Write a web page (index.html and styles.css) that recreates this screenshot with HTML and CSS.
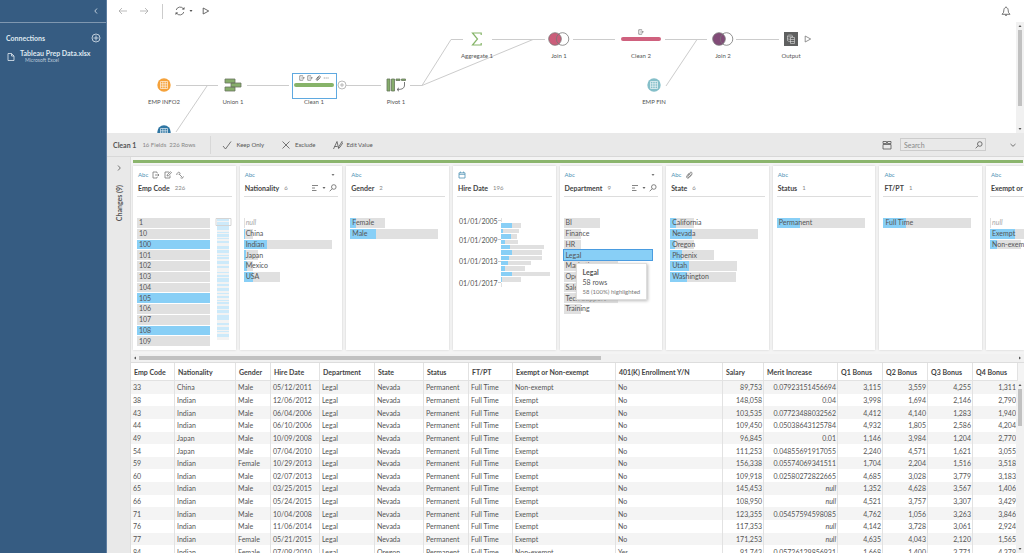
FILE: index.html
```html
<!DOCTYPE html>
<html lang="en">
<head>
<meta charset="utf-8">
<title>Tableau Prep</title>
<link rel="stylesheet" href="styles.css">
</head>
<body>
<svg class="symbols" aria-hidden="true">
  <symbol id="i-rename" viewBox="0 0 8 8"><path d="M5 2V1H1v6h4V6M3 4h4M5.700 2.700L7 4 5.700 5.300"/></symbol>
  <symbol id="i-edit" viewBox="0 0 8 8"><path d="M5 1H1v6h5V4.500M3 5l.4-1.400L6.500.700l1 1L4.400 4.700z"/></symbol>
  <symbol id="i-calc" viewBox="0 0 8 8"><path d="M.7 4C1 1 3.500.500 4 2.200c.4 1.500-1.500 2-1 .6M3.500 3.500L6.500 6.500M4.500 6.800c1.500.8 2.800 0 3-1.300"/></symbol>
  <symbol id="i-clip" viewBox="0 0 8 8"><path d="M5.500 2.500L3 5.200c-.6.800.5 1.600 1.100.9L6.800 3c1-1.300-.7-2.600-1.700-1.500L1.800 5c-1 1.500.8 3 2.200 1.700L7 3.500M4.500 2L2.500 4.200"/></symbol>
  <symbol id="i-search" viewBox="0 0 8 8"><circle cx="4.800" cy="3" r="2.300"/><path d="M3.200 4.700L.7 7.300"/></symbol>
  <symbol id="i-sort" viewBox="0 0 8 8"><path d="M1 1.500h6M1 4h3M1 6.500h4.500"/></symbol>
  <symbol id="i-caret" viewBox="0 0 4 4"><path class="solid" d="M.5 1h3L2 3z"/></symbol>
  <symbol id="i-play" viewBox="0 0 8 8"><path d="M1.200 1v6l5.500-3z"/></symbol>
  <symbol id="i-table" viewBox="0 0 14 14"><circle class="disc" cx="7" cy="7" r="6.700"/><path class="gridlines" d="M3.500 3.500h7v7h-7zM3.500 5.800h7M3.500 8.200h7M5.800 3.500v7M8.200 3.500v7"/></symbol>
  <symbol id="i-join" viewBox="0 0 22 14"><circle class="ring" cx="14.500" cy="7" r="6.300"/><circle class="disc" cx="7" cy="7" r="6.300"/><circle class="ring" cx="7" cy="7" r="6.300"/><path class="ring" d="M10.800 2a6.300 6.300 0 0 0 0 10"/></symbol>
</svg>
<div class="app">
  <aside class="sidebar">
    <div class="sidebar-top"><button class="plain" aria-label="Collapse"><svg class="ic" viewBox="0 0 8 8"><path d="M5 1.500L2.800 4 5 6.500"/></svg></button></div>
    <div class="conn-head"><h2>Connections</h2><button class="plain" aria-label="Add connection"><svg class="ic add" viewBox="0 0 10 10"><circle cx="5" cy="5" r="4"/><path d="M5 2.500v5M2.500 5h5"/></svg></button></div>
    <a class="conn" href="#">
      <svg class="ic" viewBox="0 0 8 8"><path d="M1 .5h3.500L7 3v4.500H1zM4.500.500V3H7"/></svg>
      <span><b>Tableau Prep Data.xlsx</b><small>Microsoft Excel</small></span>
    </a>
  </aside>
  <main class="main">
    <header class="toolbar">
      <button class="plain faint" aria-label="Back"><svg class="arrow" viewBox="0 0 10 8"><path d="M9 4H1M4 1L1 4l3 3"/></svg></button>
      <button class="plain faint" aria-label="Forward"><svg class="arrow" viewBox="0 0 10 8"><path d="M1 4h8M6 1l3 3-3 3"/></svg></button>
      <span class="rule"></span>
      <button class="plain refresh" aria-label="Refresh"><svg class="arrow" viewBox="0 0 10 10"><path d="M1.200 4A4 4 0 0 1 8.500 3M8.800 6A4 4 0 0 1 1.500 7"/><path class="solid" d="M6.800 3.500h2.700V1zM3.200 6.500H.5V9z"/></svg><svg class="caret"><use href="#i-caret"/></svg></button>
      <button class="plain run" aria-label="Run"><svg class="ic"><use href="#i-play"/></svg></button>
      <button class="plain bell" aria-label="Notifications"><svg class="arrow" viewBox="0 0 10 10"><path d="M5 .5v1M1 8.300h8L7.500 6.500 7 3.200C6.500 1 3.500 1 3 3.200L2.500 6.500zM4 9.300h2"/></svg></button>
    </header>
    <section class="flow">
      <svg class="links" aria-hidden="true"><path d="M69 63.500h42M100 64L69 110M140 63.500h42M239 63.500h35M303 63.500h12L344 17.500h12M315 63.500L426 17.500M385 17.500h53M466 17.500h42M558 17.500h42M559 64L590 17.500M600 17.500h-20M629 17.500h43"/></svg>
      <div class="node n-info"><svg class="disc-ic orange"><use href="#i-table"/></svg><span>EMP INFO2</span></div>
      <div class="node n-blue"><svg class="disc-ic blue"><use href="#i-table"/></svg></div>
      <div class="node n-union"><svg class="union" viewBox="0 0 18 14"><path d="M1 1h10v4H1zM7 5h10v4H7zM1 9h10v4H1z"/></svg><span>Union 1</span></div>
      <div class="node n-clean selected"><span class="marks"><svg><use href="#i-rename"/></svg><svg><use href="#i-rename"/></svg><svg><use href="#i-clip"/></svg><svg viewBox="0 0 8 8"><path d="M1 4h1.500M3.500 4H5M6 4h1.500"/></svg></span><span class="step green"></span><span>Clean 1</span></div>
      <button class="plain plus" aria-label="Add step"><svg class="add" viewBox="0 0 10 10"><circle cx="5" cy="5" r="4"/><path d="M5 3v4M3 5h4"/></svg></button>
      <div class="node n-pivot"><svg class="pivot" viewBox="0 0 20 14"><path class="g" d="M1 1h3v12H1zM5.500 1h3v12h-3zM10 1h4v1.500h-4zM15.500 1h4v1.500h-4z"/><path d="M18.500 4v3c0 3-2 4.500-7 4.500M13 9.800l-2 1.700 2 1.700"/></svg><span>Pivot 1</span></div>
      <div class="node n-agg"><svg class="sigma" viewBox="0 0 12 14"><path d="M10.200 3V1H1.500l5 6-5 6h8.700v-2"/></svg><span>Aggregate 1</span></div>
      <div class="node n-join1"><svg class="join rose"><use href="#i-join"/></svg><span>Join 1</span></div>
      <div class="node n-clean2"><span class="marks"><svg><use href="#i-rename"/></svg></span><span class="step rose-bg"></span><span>Clean 2</span></div>
      <div class="node n-join2"><svg class="join plum"><use href="#i-join"/></svg><span>Join 2</span></div>
      <div class="node n-fin"><svg class="disc-ic teal"><use href="#i-table"/></svg><span>EMP FIN</span></div>
      <div class="node n-out"><svg class="output" viewBox="0 0 14 14"><path class="bg" d="M0 0h14v14H0z"/><path d="M7 9.500c-1.500 0-3.500-.2-3.500-1V4c0-1.300 5-1.300 5 0v1M3.500 4c0 1.200 5 1.200 5 0M3.500 6.300c0 .8 1.500 1 3 1M6.500 5.500h4v6h-4zM6.500 7.500h4M6.500 9.500h4"/></svg><span>Output</span></div>
      <button class="plain out-run" aria-label="Run output"><svg class="ic"><use href="#i-play"/></svg></button>
      <div class="vscroll"><svg class="caret up"><use href="#i-caret"/></svg><i></i><svg class="caret"><use href="#i-caret"/></svg></div>
    </section>
    <section class="stepbar">
      <h1>Clean 1</h1><span class="counts">16 Fields&ensp;226 Rows</span><span class="divider"></span>
      <button class="action"><svg class="arrow" viewBox="0 0 10 10"><path d="M1 6l2.500 3L9 1.500"/></svg>Keep Only</button>
      <button class="action"><svg class="arrow" viewBox="0 0 10 10"><path d="M1.500 1.500l7 7M8.500 1.500l-7 7"/></svg>Exclude</button>
      <button class="action"><svg class="arrow" viewBox="0 0 10 10"><path d="M.5 9L4 1.500 5.500 8M1.500 6.500h3M5.500 8.500l.5-2L9 1.500l1 1-3 4.700z"/></svg>Edit Value</button>
      <button class="plain view" aria-label="Switch view"><svg class="arrow" viewBox="0 0 10 10"><path d="M1 1.500h3.500v2H1zM5.500 1.500H9v2H5.500zM1 4.500h8V9H1z"/></svg></button>
      <label class="search"><input type="text" placeholder="Search" aria-label="Search"><svg class="ic"><use href="#i-search"/></svg></label>
      <button class="plain chev" aria-label="Collapse pane"><svg class="ic" viewBox="0 0 8 8"><path d="M1.500 3L4 5.300 6.500 3"/></svg></button>
    </section>
    <div class="work">
      <aside class="changes"><button class="plain" aria-label="Expand changes"><svg class="ic" viewBox="0 0 8 8"><path d="M3 1.500L5.300 4 3 6.500"/></svg></button><span>Changes (9)</span></aside>
      <div class="panes">
        <section class="profile">
          <div class="greenbar"></div>
          <div class="cards">
            <article class="card">
              <div class="kind">Abc<svg><use href="#i-rename"/></svg><svg><use href="#i-edit"/></svg><svg><use href="#i-calc"/></svg></div>
              <h3>Emp Code<em>226</em></h3>
              <div class="body codes">
                <ul class="list full"><li><i></i><span>1</span></li><li><i></i><span>10</span></li><li class="on"><i></i><span>100</span></li><li><i></i><span>101</span></li><li><i></i><span>102</span></li><li><i></i><span>103</span></li><li><i></i><span>104</span></li><li class="on"><i></i><span>105</span></li><li><i></i><span>106</span></li><li><i></i><span>107</span></li><li class="on"><i></i><span>108</span></li><li><i></i><span>109</span></li></ul>
                <svg class="minimap" viewBox="0 0 17 122" preserveAspectRatio="none"><path class="base" d="M2 0h12v122H2z"/><path class="hit" d="M2 1h12v2H2zM2 4h12v3H2zM2 8h12v4H2zM2 14h12v1H2zM2 16h12v3H2zM2 20h12v1H2zM2 23h12v2H2zM2 28h12v3H2zM2 32h12v3H2zM2 37h12v1H2zM2 39h12v2H2zM2 43h12v3H2zM2 48h12v2H2zM2 54h12v1H2zM2 57h12v2H2zM2 60h12v4H2zM2 66h12v2H2zM2 70h12v3H2zM2 75h12v1H2zM2 78h12v2H2zM2 82h12v1H2zM2 84h12v2H2zM2 88h12v3H2zM2 92h12v3H2zM2 97h12v5H2zM2 105h12v2H2zM2 109h12v3H2zM2 113h12v1H2zM2 116h12v3H2z"/><path class="lens" d="M1 .5h15v7H1z"/></svg>
              </div>
            </article>
            <article class="card">
              <div class="kind">Abc<svg class="menu"><use href="#i-caret"/></svg></div>
              <h3>Nationality<em>6</em><span class="tools"><svg><use href="#i-sort"/></svg><svg class="caret"><use href="#i-caret"/></svg><svg><use href="#i-search"/></svg></span></h3>
              <div class="body"><ul class="list">
                <li class="null"><i style="width:1%"></i><span>null</span></li>
                <li><i style="width:11%"></i><b style="width:2%"></b><span>China</span></li>
                <li><i style="width:100%"></i><b style="width:26%"></b><span>Indian</span></li>
                <li><i style="width:16%"></i><b style="width:3%"></b><span>Japan</span></li>
                <li><i style="width:11%"></i><b style="width:4%"></b><span>Mexico</span></li>
                <li><i style="width:41%"></i><b style="width:11%"></b><span>USA</span></li>
              </ul></div>
            </article>
            <article class="card">
              <div class="kind">Abc</div><h3>Gender<em>2</em></h3>
              <div class="body"><ul class="list">
                <li><i style="width:40%"></i><b style="width:7%"></b><span>Female</span></li>
                <li><i style="width:100%"></i><b style="width:29%"></b><span>Male</span></li>
              </ul></div>
            </article>
            <article class="card">
              <div class="kind"><svg class="cal" viewBox="0 0 8 8"><path d="M1 1.800h6v5.200H1zM1 3.300h6M2.500.600v1.200M5.500.600v1.200"/></svg></div><h3>Hire Date<em>196</em></h3>
              <div class="body hist">
                <div class="axis"><span class="d1">01/01/2005</span><span class="d2">01/01/2009</span><span class="d3">01/01/2013</span><span class="d4">01/01/2017</span></div>
                <ul class="bins">
                  <li><i style="width:3%"></i></li>
                  <li><i style="width:41%"></i><b style="width:24%"></b></li>
                  <li><i style="width:38%"></i><b style="width:5%"></b></li>
                  <li><i style="width:33%"></i><b style="width:21%"></b></li>
                  <li><i style="width:35%"></i><b style="width:8%"></b></li>
                  <li><i style="width:88%"></i><b style="width:20%"></b></li>
                  <li><i style="width:85%"></i><b style="width:24%"></b></li>
                  <li><i style="width:85%"></i><b style="width:17%"></b></li>
                  <li><i style="width:62%"></i><b style="width:15%"></b></li>
                  <li><i style="width:50%"></i><b style="width:9%"></b></li>
                  <li><i style="width:100%"></i><b style="width:24%"></b></li>
                  <li><i style="width:41%"></i><b style="width:3%"></b></li>
                  <li><i style="width:3%"></i></li>
                </ul>
              </div>
            </article>
            <article class="card">
              <div class="kind">Abc<svg class="menu"><use href="#i-caret"/></svg></div>
              <h3>Department<em>9</em><span class="tools"><svg><use href="#i-sort"/></svg><svg class="caret"><use href="#i-caret"/></svg><svg><use href="#i-search"/></svg></span></h3>
              <div class="body"><ul class="list">
                <li><i style="width:41%"></i><span>BI</span></li>
                <li><i style="width:20%"></i><span>Finance</span></li>
                <li><i style="width:20%"></i><span>HR</span></li>
                <li class="picked"><i></i><span>Legal</span></li>
                <li><i style="width:62%"></i><span>Marketing</span></li>
                <li><i style="width:41%"></i><span>Operations</span></li>
                <li><i style="width:41%"></i><span>Sales</span></li>
                <li><i style="width:62%"></i><span>Tech Support</span></li>
                <li><i style="width:20%"></i><span>Training</span></li>
              </ul>
              <div class="tip" role="tooltip"><strong>Legal</strong><span>58 rows</span><small>58 (100%) highlighted</small></div></div>
            </article>
            <article class="card">
              <div class="kind">Abc<svg><use href="#i-clip"/></svg></div><h3>State<em>6</em></h3>
              <div class="body"><ul class="list">
                <li><i style="width:27%"></i><b style="width:7%"></b><span>California</span></li>
                <li><i style="width:100%"></i><b style="width:25%"></b><span>Nevada</span></li>
                <li><i style="width:27%"></i><b style="width:6%"></b><span>Oregon</span></li>
                <li><i style="width:50%"></i><b style="width:13%"></b><span>Phoenix</span></li>
                <li><i style="width:76%"></i><b style="width:21%"></b><span>Utah</span></li>
                <li><i style="width:75%"></i><b style="width:19%"></b><span>Washington</span></li>
              </ul></div>
            </article>
            <article class="card">
              <div class="kind">Abc</div><h3>Status<em>1</em></h3>
              <div class="body"><ul class="list"><li><i style="width:100%"></i><b style="width:26%"></b><span>Permanent</span></li></ul></div>
            </article>
            <article class="card">
              <div class="kind">Abc</div><h3>FT/PT<em>1</em></h3>
              <div class="body"><ul class="list"><li><i style="width:100%"></i><b style="width:26%"></b><span>Full Time</span></li></ul></div>
            </article>
            <article class="card cut">
              <div class="kind">Abc</div><h3>Exempt or</h3>
              <div class="body"><ul class="list">
                <li class="null"><i style="width:1%"></i><span>null</span></li>
                <li><i style="width:100%"></i><b style="width:28%"></b><span>Exempt</span></li>
                <li><i style="width:35%"></i><b style="width:8%"></b><span>Non-exempt</span></li>
              </ul></div>
            </article>
          </div>
          <div class="hscroll"><svg class="caret left"><use href="#i-caret"/></svg><i></i><svg class="caret right"><use href="#i-caret"/></svg></div>
        </section>
        <section class="grid">
          <div class="gridview">
          <table>
            <colgroup><col class="w44"><col class="w61"><col class="w35"><col class="w49"><col class="w55"><col class="w49"><col class="w45"><col class="w44"><col class="w103"><col class="w107"><col class="w41"><col class="w74"><col class="w45"><col class="w45"><col class="w45"><col class="w45"></colgroup>
            <thead><tr><th>Emp Code</th><th>Nationality</th><th>Gender</th><th>Hire Date</th><th>Department</th><th>State</th><th>Status</th><th>FT/PT</th><th>Exempt or Non-exempt</th><th>401(K) Enrollment Y/N</th><th>Salary</th><th>Merit Increase</th><th>Q1 Bonus</th><th>Q2 Bonus</th><th>Q3 Bonus</th><th>Q4 Bonus</th></tr></thead>
            <tbody>
              <tr><td>33<td>China<td>Male<td>05/12/2011<td>Legal<td>Nevada<td>Permanent<td>Full Time<td>Non-exempt<td>No<td>89,753<td>0.07923151456694<td>3,115<td>3,559<td>4,255<td>1,311</tr>
              <tr><td>38<td>Indian<td>Male<td>12/06/2012<td>Legal<td>Nevada<td>Permanent<td>Full Time<td>Exempt<td>No<td>148,058<td>0.04<td>3,998<td>1,694<td>2,146<td>2,790</tr>
              <tr><td>43<td>Indian<td>Male<td>06/04/2006<td>Legal<td>Nevada<td>Permanent<td>Full Time<td>Exempt<td>No<td>103,535<td>0.07723488032562<td>4,412<td>4,140<td>1,283<td>1,940</tr>
              <tr><td>44<td>Indian<td>Male<td>06/10/2006<td>Legal<td>Nevada<td>Permanent<td>Full Time<td>Exempt<td>No<td>109,450<td>0.05038643125784<td>4,932<td>1,805<td>2,586<td>4,204</tr>
              <tr><td>49<td>Japan<td>Male<td>10/09/2008<td>Legal<td>Nevada<td>Permanent<td>Full Time<td>Exempt<td>No<td>96,845<td>0.01<td>1,146<td>3,984<td>1,204<td>2,770</tr>
              <tr><td>54<td>Japan<td>Male<td>07/04/2010<td>Legal<td>Nevada<td>Permanent<td>Full Time<td>Exempt<td>No<td>111,253<td>0.04855691917055<td>2,240<td>4,571<td>1,621<td>3,055</tr>
              <tr><td>59<td>Indian<td>Female<td>10/29/2013<td>Legal<td>Nevada<td>Permanent<td>Full Time<td>Exempt<td>No<td>156,338<td>0.05574069341511<td>1,704<td>2,204<td>1,516<td>3,518</tr>
              <tr><td>60<td>Indian<td>Male<td>02/07/2013<td>Legal<td>Nevada<td>Permanent<td>Full Time<td>Exempt<td>No<td>109,918<td>0.02580272822665<td>4,685<td>3,028<td>3,779<td>3,183</tr>
              <tr><td>65<td>Indian<td>Male<td>03/25/2015<td>Legal<td>Nevada<td>Permanent<td>Full Time<td>Exempt<td>No<td>145,453<td><em>null</em><td>1,352<td>4,628<td>3,567<td>1,406</tr>
              <tr><td>66<td>Indian<td>Male<td>05/24/2015<td>Legal<td>Nevada<td>Permanent<td>Full Time<td>Exempt<td>No<td>108,950<td><em>null</em><td>4,521<td>3,757<td>3,307<td>3,429</tr>
              <tr><td>71<td>Indian<td>Male<td>10/04/2008<td>Legal<td>Nevada<td>Permanent<td>Full Time<td>Exempt<td>No<td>123,355<td>0.05457594598085<td>4,762<td>1,056<td>3,263<td>3,846</tr>
              <tr><td>76<td>Indian<td>Male<td>11/06/2014<td>Legal<td>Nevada<td>Permanent<td>Full Time<td>Exempt<td>No<td>117,353<td><em>null</em><td>4,142<td>3,728<td>3,061<td>2,924</tr>
              <tr><td>77<td>Indian<td>Female<td>05/21/2015<td>Legal<td>Nevada<td>Permanent<td>Full Time<td>Exempt<td>No<td>171,253<td><em>null</em><td>4,635<td>4,043<td>2,120<td>1,565</tr>
              <tr><td>84<td>Indian<td>Female<td>07/09/2010<td>Legal<td>Oregon<td>Permanent<td>Full Time<td>Non-exempt<td>Yes<td>91,743<td>0.05726129856931<td>1,668<td>1,400<td>3,771<td>4,379</tr>
            </tbody>
          </table>
          </div>
          <div class="vscroll grid-scroll"><svg class="caret up"><use href="#i-caret"/></svg><i></i><svg class="caret"><use href="#i-caret"/></svg></div>
        </section>
      </div>
    </div>
  </main>
</div>
</body>
</html>
```
FILE: styles.css
```css
* { box-sizing: border-box; }
body { margin: 0; font: 7px/10px Lato, "Noto Sans", sans-serif; color: #555; background: #fff; overflow: hidden; }
h1, h2, h3, ul { margin: 0; padding: 0; font-size: 7px; }
ul { list-style: none; }
svg { fill: none; stroke: currentColor; stroke-width: 0.8; flex: none; display: block; }
.solid { fill: currentColor; stroke: none; }
.symbols { position: absolute; width: 0; height: 0; }
button { font: inherit; color: inherit; border: 0; background: none; padding: 0; display: flex; align-items: center; }
.ic { width: 8px; height: 8px; }
.arrow { width: 10px; height: 10px; }
.add { width: 10px; height: 10px; }
.caret { width: 4px; height: 4px; }

.app { display: flex; height: 100vh; }
.sidebar { flex: 0 0 107px; background: #365c82; color: #dfe8f0; border-right: 1px solid #5d7da0; }
.sidebar-top { height: 23px; display: flex; justify-content: flex-end; padding-right: 6px; border-bottom: 1px solid #7f97b0; }
.conn-head { display: flex; align-items: center; justify-content: space-between; padding: 9px 5px 0 6px; height: 20px; }
.conn { display: flex; gap: 5px; padding: 7px 0 0 7px; color: inherit; text-decoration: none; align-items: center; }
.conn span { display: flex; flex-direction: column; white-space: nowrap; }
.conn b { line-height: 7px; }
.conn small { font-size: 5px; line-height: 6px; padding-left: 5px; color: #b9c8d8; }

.main { flex: 1; min-width: 0; display: flex; flex-direction: column; }
.toolbar { height: 22px; flex: none; display: flex; align-items: center; padding: 0 13px 0 11px; }
.faint { color: #aaa; margin-right: 11px; }
.rule { width: 1px; height: 15px; background: #ccc; margin-left: 2px; }
.refresh { margin-left: 12px; gap: 4px; }
.run { margin-left: 9px; }
.run .ic { color: #444; }
.bell { margin-left: auto; }

.flow { position: relative; height: 111px; flex: none; overflow: hidden; }
.links { position: absolute; inset: 0; width: 100%; height: 100%; stroke: #ccc; stroke-width: 1; }
.node { position: absolute; width: 46px; height: 36px; padding-top: 7px; display: flex; flex-direction: column; align-items: center; justify-content: space-between; font-size: 6px; line-height: 8px; white-space: nowrap; }
.node > svg { height: 14px; margin-top: 1px; }
.n-info { left: 34px; top: 48px; }
.n-blue { left: 34px; top: 95px; }
.n-union { left: 103px; top: 48px; }
.n-clean { left: 184px; top: 48px; }
.n-pivot { left: 266px; top: 48px; }
.n-agg { left: 347px; top: 2px; }
.n-join1 { left: 429px; top: 2px; }
.n-clean2 { left: 511px; top: 2px; }
.n-join2 { left: 593px; top: 2px; }
.n-fin { left: 524px; top: 48px; }
.n-out { left: 661px; top: 2px; }
.disc-ic { width: 14px; }
.disc { stroke: none; fill: var(--c); }
.gridlines { stroke: #fff; stroke-width: 0.6; }
.orange { --c: #f5a23b; }
.blue { --c: #2f76a3; }
.teal { --c: #85bfc9; }
.rose { --c: #cb5d7a; }
.plum { --c: #814b77; }
.union { width: 18px; fill: #86ad6b; stroke: #6b755f; }
.sigma { width: 12px; stroke: #86b569; stroke-width: 1.2; }
.pivot { width: 20px; }
.pivot .g { fill: #86ad6b; stroke: #66775a; }
.join { width: 22px; }
.ring { stroke: #777; stroke-width: 0.8; }
.output { width: 14px; stroke: #ddd; stroke-width: 0.6; }
.output .bg { fill: #5f6060; stroke: none; }
.marks { display: flex; gap: 2px; height: 6px; }
.marks svg { width: 6px; height: 6px; }
.step { width: 40px; height: 4px; margin: 2px 0 auto; border-radius: 2px; }
.green { background: #87b369; }
.rose-bg { background: #cf617e; }
.n-clean, .n-clean2 { padding-top: 5px; }
.n-clean2 .step { margin-top: 2px; }
.selected::before { content: ""; position: absolute; left: 1px; right: 0; top: 3px; height: 24px; border: 1px solid #5fa9e0; }
.plus { position: absolute; left: 230px; top: 58px; color: #aaa; }
.out-run { position: absolute; left: 697px; top: 13px; color: #777; }
.vscroll { position: absolute; right: 0; top: 0; bottom: 0; width: 8px; background: #f1f1f1; display: flex; flex-direction: column; align-items: center; justify-content: space-between; padding: 2px 0; }
.vscroll i { width: 4px; height: 76px; background: #c1c1c1; margin: 2px 0 auto; }
.up { transform: rotate(180deg); }
.left { transform: rotate(90deg); }
.right { transform: rotate(-90deg); }

.stepbar { height: 24px; flex: none; display: flex; align-items: center; background: #e9e9e9; border-bottom: 1px solid #d8d8d8; padding: 0 7px 0 6px; }
.counts { font-size: 6px; color: #888; margin-left: 6px; }
.divider { width: 1px; height: 18px; background: #d8d8d8; margin: 0 11px 0 15px; }
.action { font-size: 6px; gap: 4px; margin-right: 17px; }
.view { margin-left: auto; }
.search { display: flex; align-items: center; border: 1px solid #ccc; height: 13px; width: 86px; margin: 0 23px 0 8px; padding-right: 2px; }
.search input { flex: 1; min-width: 0; border: 0; background: none; font: inherit; padding: 0 3px; color: #555; }
.search input::placeholder { color: #888; }

.work { flex: 1; min-height: 0; display: flex; }
.changes { flex: 0 0 24px; background: #e9e9e9; border-right: 1px solid #ddd; display: flex; flex-direction: column; align-items: center; padding-top: 7px; gap: 13px; }
.changes span { writing-mode: vertical-rl; transform: rotate(180deg); font-weight: 700; white-space: nowrap; }
.panes { flex: 1; min-width: 0; display: flex; flex-direction: column; }
.profile { background: #f4f4f4; flex: none; height: 205px; display: flex; flex-direction: column; }
.greenbar { height: 3px; background: #8bb56d; margin: 3px 1px 3px 2px; flex: none; }
.cards { flex: 1; min-height: 0; display: grid; grid-template-columns: repeat(8, minmax(0, 1fr)) 38px; grid-template-rows: minmax(0, 1fr); gap: 4px; padding-left: 2px; margin-bottom: 4px; }
.card { background: #fff; box-shadow: 0 0 2px #ccc; display: flex; flex-direction: column; padding: 0 4px 3px; min-width: 0; }
.cut { overflow: hidden; padding-right: 0; }
.kind { height: 17px; display: flex; align-items: center; gap: 4px; padding-left: 1px; font-size: 6px; color: #4f93b5; }
.kind svg { width: 8px; height: 8px; color: #777; }
.kind .cal { color: #4f93b5; }
.kind .menu { width: 4px; height: 4px; margin: 0 3px 0 auto; }
.card h3 { display: flex; align-items: center; height: 14px; padding: 0 1px 4px; border-bottom: 1px solid #ddd; color: #444; white-space: nowrap; }
.card h3 em { font-size: 6px; font-weight: 400; font-style: normal; color: #888; margin-left: 5px; }
.tools { display: flex; align-items: center; gap: 3px; margin-left: auto; color: #666; }
.tools svg { width: 8px; height: 8px; }
.tools .caret { width: 4px; height: 4px; }
.body { flex: 1; min-height: 0; margin-top: 21px; position: relative; display: flex; }
.list { flex: 0 0 88px; display: grid; grid-template-rows: repeat(12, minmax(0, 1fr)); }
.list li, .bins li { display: grid; grid-template-columns: minmax(0, 1fr); grid-template-rows: minmax(0, 1fr); padding-bottom: 1px; min-height: 0; }
.list li > *, .bins li > * { grid-area: 1 / 1; }
.list i, .bins i { background: #e0e0e0; }
.list b, .bins b { background: #88cff6; }
.list span { align-self: center; padding-left: 2px; white-space: nowrap; line-height: 9px; }
.list .null span { font-style: italic; color: #aaa; }
.list.full { flex: 0 0 73px; }
.list .on i, .list .picked i { background: #88cff6; }
.list .picked i { outline: 1px solid #4a9ce0; }
.minimap { width: 17px; height: 122px; margin-left: 5px; stroke: none; }
.minimap .base { fill: #f3f3f3; }
.minimap .hit { fill: #cdeafa; }
.minimap .lens { stroke: #ccc; }
.axis { flex: 0 0 43px; display: grid; grid-template-rows: repeat(24, minmax(0, 1fr)); padding-left: 2px; }
.axis span { display: flex; align-items: center; justify-content: space-between; line-height: 8px; height: 8px; align-self: center; }
.axis span::after { content: ""; width: 3px; height: 1px; background: #ccc; }
.d1 { grid-row: 1; }
.d2 { grid-row: 4 / span 2; }
.d3 { grid-row: 8 / span 2; }
.d4 { grid-row: 12 / span 2; }
.bins { flex: 0 0 49px; display: grid; grid-template-rows: repeat(24, minmax(0, 1fr)); }
.tip { position: absolute; z-index: 2; left: 12px; top: 45px; background: #fff; border: 1px solid #ddd; box-shadow: 1px 1px 3px #bbb; padding: 3px 6px; display: flex; flex-direction: column; white-space: nowrap; }
.tip small { font-size: 6px; line-height: 9px; color: #777; }
.hscroll { height: 8px; flex: none; background: #f1f1f1; display: flex; align-items: center; padding: 0 2px; gap: 2px; }
.hscroll i { flex: 0 0 52%; height: 4px; background: #c1c1c1; }
.hscroll .right { margin-left: auto; }

.grid { flex: 1; min-height: 0; position: relative; padding-right: 8px; overflow: hidden; background: #f4f4f4; border-top: 1px solid #ddd; }
.gridview { height: 100%; }
table { width: 100%; height: calc(100% + 5px); table-layout: fixed; border-collapse: separate; border-spacing: 0; background: #fff; }
th, td { padding: 0 2px; border-right: 1px solid #e2e2e2; white-space: nowrap; line-height: 10px; text-align: left; }
th { height: 18px; padding: 0 3px; color: #444; border-bottom: 1px solid #e2e2e2; }
td:nth-child(n+11) { text-align: right; padding-right: 1px; }
tbody tr:nth-child(odd) { background: #f4f4f4; }
.w35 { width: 35px; } .w41 { width: 41px; } .w44 { width: 44px; } .w45 { width: 45px; } .w49 { width: 49px; }
.w55 { width: 55px; } .w61 { width: 61px; } .w74 { width: 74px; } .w103 { width: 103px; } .w107 { width: 107px; }
.grid-scroll { top: 18px; }
.grid-scroll i { height: 37px; }
```
